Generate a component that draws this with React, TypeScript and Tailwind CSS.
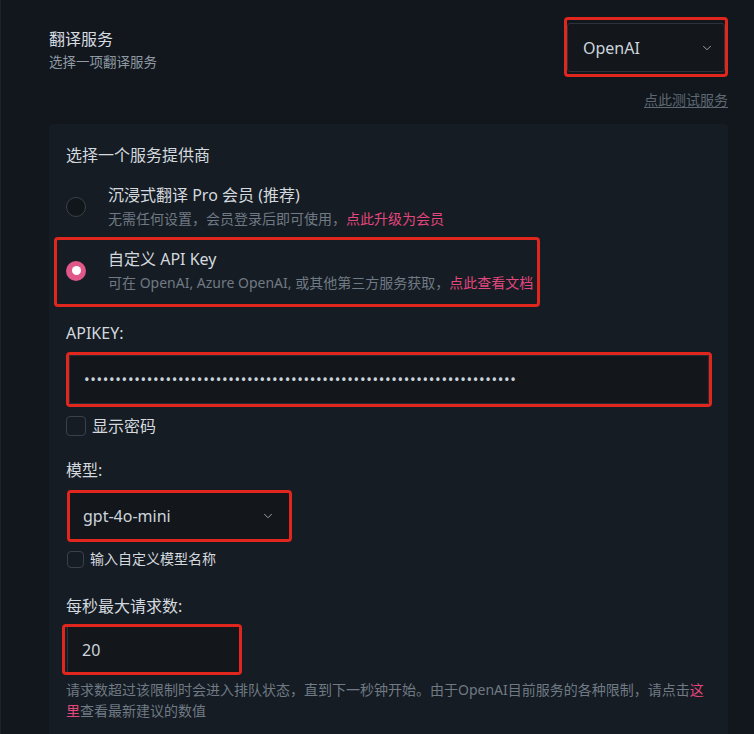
import { ChevronDown } from 'lucide-react';

function RedBox({ className = '', children }: { className?: string; children: React.ReactNode }) {
  return <div className={`border-[3px] border-[#e0261d] rounded-[4px] ${className}`}>{children}</div>;
}

export default function App() {
  return (
    <div className="w-[754px] h-[734px] overflow-hidden bg-[#12171d] border-l border-[#1c232b] font-['Noto_Sans','Noto_Sans_CJK_SC',sans-serif] text-[#d3d9df]">
      {/* header */}
      <div className="h-[124px] flex justify-between pl-[48px] pr-[26px] pt-[17px]">
        <div className="mt-[11px]">
          <div className="text-[16px] leading-[22px] text-[#d7dce1]">翻译服务</div>
          <div className="mt-[3px] text-[13.5px] leading-[18px] text-[#8e99a3]">选择一项翻译服务</div>
        </div>
        <div className="flex flex-col items-end">
          <RedBox className="w-[164px] h-[60px] pt-[3px]">
            <div className="h-[49px] bg-[#13171c] border border-[#2b323a] rounded-[3px] flex items-center justify-between pl-[15px] pr-[10px]">
              <span className="text-[16px] text-[#cdd5dc]">OpenAI</span>
              <ChevronDown size={14} strokeWidth={1.6} className="text-[#a3acb5]" />
            </div>
          </RedBox>
          <a className="mt-[13px] text-[14px] leading-[20px] text-[#5d6872] underline underline-offset-2">点此测试服务</a>
        </div>
      </div>

      {/* provider panel */}
      <div className="ml-[48px] w-[679px] h-[610px] bg-[#161c23] rounded-t-[4px] pl-[17px] pt-[20px]">
        <div className="text-[16px] leading-[22px] text-[#d3d9df]">选择一个服务提供商</div>

        <div className="mt-[18px] flex items-center gap-[22px]">
          <div className="w-[20px] h-[20px] rounded-full border border-[#39414a] bg-[#11161b]" />
          <div>
            <div className="text-[16px] leading-[22px] text-[#d3d9df]">沉浸式翻译 Pro 会员 (推荐)</div>
            <div className="mt-[3px] text-[14px] leading-[20px] text-[#6f7a84]">
              无需任何设置，会员登录后即可使用，<span className="text-[#e2467e]">点此升级为会员</span>
            </div>
          </div>
        </div>

        <RedBox className="mt-[8px] -ml-[12px] w-[486px] pl-[9px] pt-[8px] pb-[11px] flex items-center gap-[22px]">
          <div className="w-[20px] h-[20px] rounded-full bg-[#e0578a] flex items-center justify-center">
            <div className="w-[9px] h-[9px] rounded-full bg-white" />
          </div>
          <div>
            <div className="text-[16px] leading-[22px] text-[#d3d9df]">自定义 API Key</div>
            <div className="mt-[3px] text-[14px] leading-[20px] text-[#6f7a84] whitespace-nowrap">
              可在 OpenAI, Azure OpenAI, 或其他第三方服务获取，<span className="text-[#e2467e]">点此查看文档</span>
            </div>
          </div>
        </RedBox>

        <div className="mt-[15px] text-[16px] leading-[22px]">APIKEY:</div>
        <RedBox className="mt-[8px] w-[646px] h-[55px]">
          <div className="h-[49px] bg-[#13171c] border border-[#262d35] rounded-[2px] flex items-center pl-[14px]">
            <span className="text-[15px] tracking-[0.63px] text-[#c9d3db] leading-none">{'•'.repeat(69)}</span>
          </div>
        </RedBox>

        <label className="mt-[8px] flex items-center gap-[6px]">
          <div className="w-[20px] h-[20px] rounded-[4px] border border-[#39414a]" />
          <span className="text-[16px] leading-[22px]">显示密码</span>
        </label>

        <div className="mt-[22px] text-[16px] leading-[22px]">模型:</div>
        <RedBox className="mt-[9px] ml-px w-[225px] h-[52px]">
          <div className="h-[46px] bg-[#13171c] rounded-[2px] flex items-center justify-between pl-[13px] pr-[14px]">
            <span className="text-[16px] text-[#cdd5dc]">gpt-4o-mini</span>
            <ChevronDown size={14} strokeWidth={1.6} className="text-[#a3acb5]" />
          </div>
        </RedBox>

        <label className="mt-[7px] flex items-center gap-[6px] ml-px">
          <div className="w-[17px] h-[17px] rounded-[4px] border border-[#39414a]" />
          <span className="text-[14px] leading-[20px]">输入自定义模型名称</span>
        </label>

        <div className="mt-[26px] text-[16px] leading-[22px]">每秒最大请求数:</div>
        <RedBox className="mt-[7px] -ml-[4px] w-[180px] h-[51px]">
          <div className="ml-[2px] h-[45px] bg-[#13171c] border-l border-[#2b323a] flex items-center pl-[14px]">
            <span className="text-[16px] text-[#cdd5dc]">20</span>
          </div>
        </RedBox>

        <div className="mt-[4px] text-[14px] leading-[21px] text-[#6f7a84] whitespace-nowrap">
          <div>
            请求数超过该限制时会进入排队状态，直到下一秒钟开始。由于OpenAI目前服务的各种限制，请点击<span className="text-[#e2467e]">这</span>
          </div>
          <div>
            <span className="text-[#e2467e]">里</span>查看最新建议的数值
          </div>
        </div>
      </div>
    </div>
  );
}
